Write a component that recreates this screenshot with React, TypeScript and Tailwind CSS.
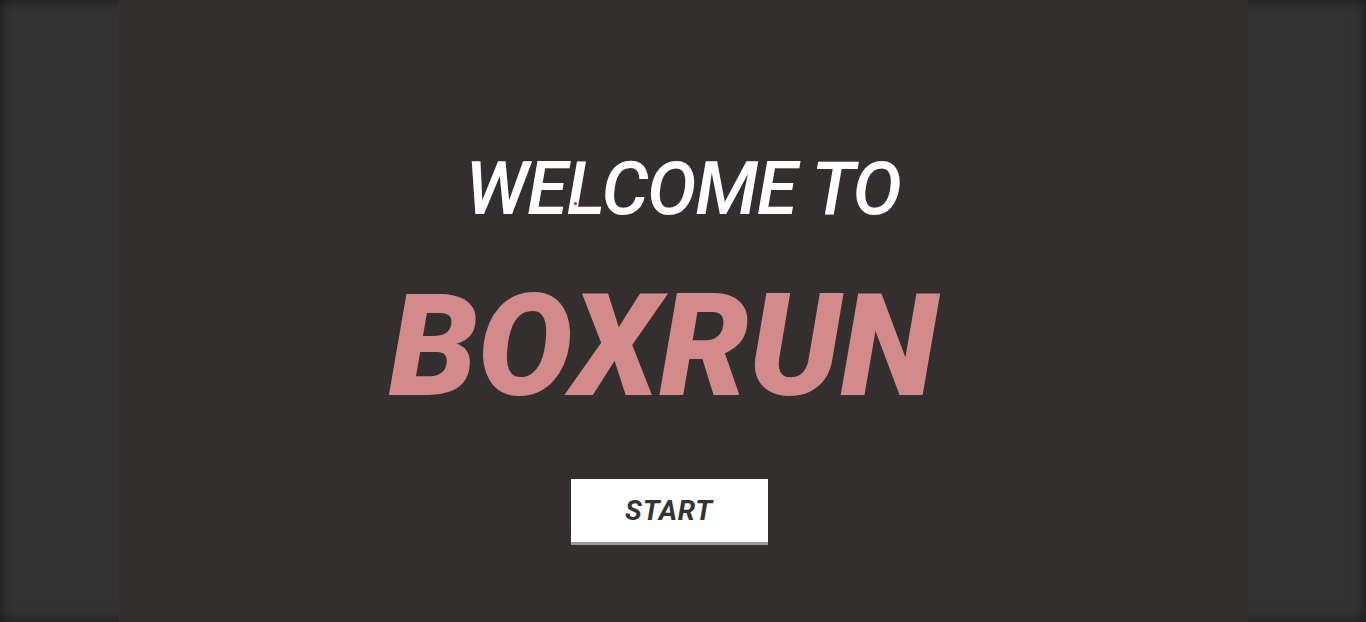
import React from "react";

export default function App() {
  return (
    <div className="relative h-[622px] w-full overflow-hidden bg-[#333333] shadow-[inset_0_0_14px_rgba(0,0,0,0.55)]">
      <div className="relative mx-auto flex h-full w-[1129px] flex-col items-center bg-[#332f2e] font-['Roboto',sans-serif] italic">
        <div className="mt-[146px] text-[74px] font-medium leading-[86px] tracking-[-1.3px] text-white">
          WELCOME TO
        </div>
        <div className="mr-[40px] mt-[40px] text-[142px] font-black leading-[150px] tracking-[0px] text-[#d38a8a]">
          BOXRUN
        </div>
        <button className="mr-[28px] mt-[57px] flex h-[66px] w-[197px] items-center justify-center border-b-[3px] border-[#9a9a9a] bg-white text-[28px] font-bold italic tracking-[0.8px] text-[#333333]">
          START
        </button>
        <span className="absolute left-[455px] top-[202px] h-[3px] w-[3px] rounded-full bg-[#e0141e]" />
      </div>
    </div>
  );
}
